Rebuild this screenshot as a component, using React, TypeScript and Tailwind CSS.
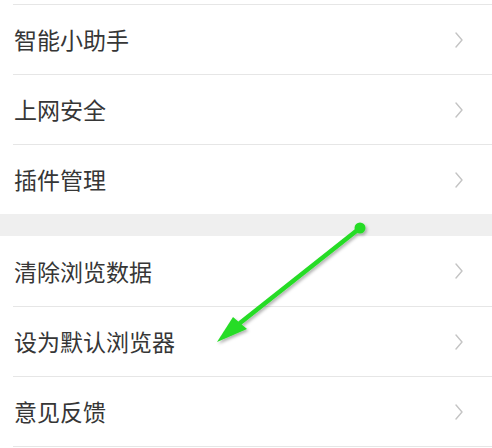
import React from "react";

const Chevron = () => (
  <svg width="10" height="18" viewBox="0 0 10 18" className="shrink-0">
    <path d="M2 2 L8 9 L2 16" fill="none" stroke="#c4c4c4" strokeWidth="1.4" strokeLinecap="round" strokeLinejoin="round" />
  </svg>
);

const Row = ({ label, border = true }: { label: string; border?: boolean }) => (
  <div className="pl-[13px]">
    <div className={`h-[70px] flex items-center justify-between pr-[28px] ${border ? "border-t border-[#e6e6e6]" : ""}`}>
      <span className="text-[23px] leading-none text-[#363636] pl-px">{label}</span>
      <Chevron />
    </div>
  </div>
);

export default function App() {
  return (
    <div
      className="relative w-[492px] h-[448px] bg-white overflow-hidden"
      style={{ fontFamily: '"Noto Sans CJK SC", "Noto Sans", sans-serif' }}
    >
      <div className="h-[4px]" />
      <Row label="智能小助手" />
      <Row label="上网安全" />
      <Row label="插件管理" />
      <div className="h-[22px] bg-[#efefef]" />
      <Row label="清除浏览数据" border={false} />
      <Row label="设为默认浏览器" />
      <Row label="意见反馈" />
      <div className="pl-[13px]">
        <div className="border-t border-[#e6e6e6]" />
      </div>
      <svg className="absolute left-0 top-0" width="492" height="448" viewBox="0 0 492 448">
        <defs>
          <filter id="sh" x="-20%" y="-20%" width="140%" height="140%">
            <feDropShadow dx="1.5" dy="2" stdDeviation="1.5" floodColor="#000" floodOpacity="0.3" />
          </filter>
        </defs>
        <g filter="url(#sh)">
          <line x1="360" y1="228" x2="240" y2="323" stroke="#26dc26" strokeWidth="4.5" strokeLinecap="round" />
          <circle cx="360" cy="228" r="5.5" fill="#26dc26" />
          <polygon points="217,342 247,329 240,323 233,317" fill="#26dc26" />
        </g>
      </svg>
    </div>
  );
}
